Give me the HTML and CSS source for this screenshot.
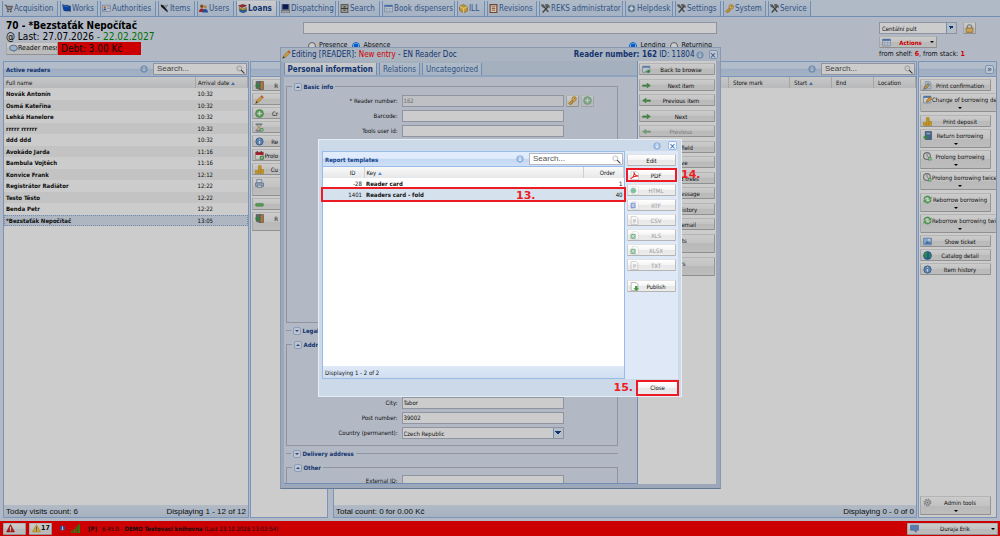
FILE: index.html
```html
<!DOCTYPE html>
<html lang="en">
<head>
<meta charset="utf-8">
<title>Loans</title>
<link rel="stylesheet" href="styles.css">
</head>
<body>
<svg class="sprite" aria-hidden="true">
  <symbol id="cart" viewBox="0 0 16 16"><path d="M1 2h3l2 8h7l2-6H5" fill="#aaa" stroke="#555" stroke-width="1.5"/><circle cx="7" cy="13" r="1.5" fill="#444"/><circle cx="12" cy="13" r="1.5" fill="#444"/></symbol>
  <symbol id="flag" viewBox="0 0 16 16"><path d="M1 1c4 3 7 0 10 2l4 1v9c-5-2-8 1-12-2z" fill="#0e55c8" stroke="#0a357e"/><path d="M2 3c4 2 6 0 9 2" stroke="#7fb2ff" fill="none"/></symbol>
  <symbol id="card" viewBox="0 0 16 16"><rect x="1" y="2" width="14" height="11" fill="#e8eefa" stroke="#7e92b5"/><circle cx="5" cy="6" r="2" fill="#d9822b"/><path d="M2 11c1-4 5-4 6 0z" fill="#3b6ec1"/><path d="M9 5h5M9 8h5" stroke="#7e92b5"/></symbol>
  <symbol id="pen" viewBox="0 0 16 16"><path d="M1 1l5 1 7 9 1 4-4-3-8-7z" fill="#222"/><path d="M8 3l6-1-4 5z" fill="#ddd" stroke="#777"/></symbol>
  <symbol id="users" viewBox="0 0 16 16"><circle cx="5" cy="4" r="3" fill="#a65c20"/><path d="M0 14c0-8 10-8 10 0z" fill="#c92a2a"/><circle cx="11" cy="5" r="3" fill="#e0a350"/><path d="M6 15c0-8 10-8 10 0z" fill="#2d63bd"/></symbol>
  <symbol id="books" viewBox="0 0 16 16"><path d="M1 3l8-2 6 2-8 3z" fill="#cf3434" stroke="#711"/><path d="M2 6l6 3 7-3v3l-7 3-6-3z" fill="#f1ce39" stroke="#86681a"/><path d="M3 10l6 2 6-2v3l-6 3-6-3z" fill="#317dcb" stroke="#174476"/></symbol>
  <symbol id="computer" viewBox="0 0 16 16"><path d="M2 0h12v10H2z" fill="#111d66" stroke="#6c7994" stroke-width="2"/><path d="M0 12h16v4H0z" fill="#ddd" stroke="#444"/></symbol>
  <symbol id="cabinet" viewBox="0 0 16 16"><path d="M2 1h12v14H2z" fill="#c5c5bb" stroke="#77776e" stroke-width="2"/><path d="M2 8h12M6 5h4M6 11h4" stroke="#444" stroke-width="2"/></symbol>
  <symbol id="grid" viewBox="0 0 16 16"><path d="M1 2h14v12H1z" fill="#fff" stroke="#6b8fc2"/><path d="M1 2h14v3H1z" fill="#4f82cc"/><path d="M5 5v9M10 5v9M1 8h14M1 11h14" stroke="#9db7dc"/></symbol>
  <symbol id="box" viewBox="0 0 16 16"><path d="M1 4l7-3 7 4v7l-7 4-7-5z" fill="#f4bd45" stroke="#9a6a13"/><path d="M1 4l7 4 7-3M8 8v8" fill="none" stroke="#fff0ae" stroke-width="2"/></symbol>
  <symbol id="list" viewBox="0 0 16 16"><path d="M2 1h12v14H2z" fill="#fffbe9" stroke="#8e5540" stroke-width="2"/><path d="M5 5h6M5 8h6M5 11h6" stroke="#c15b2c" stroke-width="1.5"/></symbol>
  <symbol id="tools" viewBox="0 0 16 16"><path d="M3 15L13 4M3 2l10 12" stroke="#555" stroke-width="2.5"/><path d="M8 1c4-2 7 1 7 5l-3-2-3 1zM1 1l4 1 1 4-4-1z" fill="#888" stroke="#444"/></symbol>
  <symbol id="globe" viewBox="0 0 16 16"><circle cx="8" cy="8" r="7" fill="#2472ce" stroke="#154b8a"/><path d="M3 3c4-3 6 0 4 3s2 3-1 7C2 12 0 7 3 3zM10 2c5 2 6 8 2 11-3-4 1-5-2-11z" fill="#3fae49"/></symbol>
  <symbol id="help" viewBox="0 0 16 16"><circle cx="8" cy="8" r="6" fill="#aac8e8" stroke="#4f7aa8"/><path d="M3 4l10 8M13 4L3 12" stroke="#557fac" stroke-width="2"/><circle cx="8" cy="8" r="3" fill="#fff"/></symbol>
  <symbol id="key" viewBox="0 0 16 16"><path d="M8 6l-7 7 2 2h3v-2h2v-3l3 1" fill="#f2bb45" stroke="#b37c22"/><circle cx="11" cy="5" r="4" fill="#ffd469" stroke="#b37c22"/><circle cx="12" cy="4" r="1" fill="#805000"/></symbol>
  <symbol id="info" viewBox="0 0 16 16"><circle cx="8" cy="8" r="6.5" fill="#a9c6e8" stroke="#7ba0cd" stroke-width="1.5"/><path d="M8 7v5M8 3v2" stroke="#f4f9ff" stroke-width="2.5"/></symbol>
  <symbol id="infodark" viewBox="0 0 16 16"><circle cx="8" cy="8" r="6.5" fill="#6fa0d8" stroke="#4674ab" stroke-width="1.5"/><path d="M8 7v5M8 3v2" stroke="#fff" stroke-width="2.5"/></symbol>
  <symbol id="search" viewBox="0 0 16 16"><circle cx="6" cy="6" r="4.5" fill="#f5f9ff" stroke="#bbb" stroke-width="1.5"/><path d="M9 9l6 6" stroke="#444" stroke-width="2"/></symbol>
  <symbol id="bubble" viewBox="0 0 16 16"><ellipse cx="8" cy="7" rx="7" ry="5" fill="#c6ddf6" stroke="#527cae" stroke-width="1.5"/><path d="M6 11l4 4v-4" fill="#79a5d2"/></symbol>
  <symbol id="pencil" viewBox="0 0 16 16"><path d="M1 15l2-5 9-9 3 3-9 9z" fill="#ffc64f" stroke="#ad761e"/><path d="M1 15l2-4 2 2z" fill="#333"/><path d="M11 2l3 3" stroke="#e55" stroke-width="2"/></symbol>
  <symbol id="plus" viewBox="0 0 16 16"><circle cx="8" cy="8" r="7" fill="#6cc46c" stroke="#4c9450"/><path d="M8 4v8M4 8h8" stroke="#fff" stroke-width="2.5"/></symbol>
  <symbol id="door" viewBox="0 0 16 16"><path d="M8 1h7v14H8z" fill="#ce9957" stroke="#704b21"/><path d="M2 1h7v14l-7-2z" fill="#798792" stroke="#555"/><path d="M0 8l5-4v3h4v3H5v3z" fill="#41a046"/></symbol>
  <symbol id="hourglass" viewBox="0 0 16 16"><path d="M1 2h12M1 14h9" stroke="#6a88b0" stroke-width="2"/><path d="M3 3h8c0 3-3 4-3 5s2 3 2 5H3c0-3 3-4 3-5S3 6 3 3z" fill="#f6dcae" stroke="#8f8270"/><circle cx="12" cy="12" r="3.5" fill="#61b565"/><path d="M12 10v4M10 12h4" stroke="#fff"/></symbol>
  <symbol id="calendar" viewBox="0 0 16 16"><path d="M1 2h14v13H1z" fill="#fff" stroke="#999"/><path d="M1 2h14v5H1z" fill="#d42030"/><path d="M4 0v4M11 0v4" stroke="#555" stroke-width="2"/><circle cx="12" cy="12" r="4" fill="#58ae59"/><path d="M12 10v4M10 12h4" stroke="#fff"/></symbol>
  <symbol id="coins" viewBox="0 0 16 16"><path d="M6 1h5v14H6zM0 10h7v5H0zM10 8h6v7h-6z" fill="#fac83d" stroke="#d39b22"/><path d="M6 4h5M6 7h5M0 12h7M10 11h6" stroke="#d39b22"/></symbol>
  <symbol id="printer" viewBox="0 0 16 16"><path d="M3 1h9v6H3z" fill="#fff" stroke="#4f79ad"/><path d="M1 7h14v6H1z" fill="#bed2ec" stroke="#48688e"/><path d="M4 11h8v4H4z" fill="#fff" stroke="#48688e"/></symbol>
  <symbol id="minus" viewBox="0 0 16 16"><rect x="1" y="6" width="14" height="5" rx="2" fill="#6cc06a" stroke="#489a4a"/></symbol>
  <symbol id="right" viewBox="0 0 16 16"><path d="M1 7h8V4l6 4-6 4V9.500H1z" fill="#58ad58" stroke="#459048"/></symbol>
  <symbol id="left" viewBox="0 0 16 16"><path d="M15 7H7V4L1 8l6 4V9.500h8z" fill="#58ad58" stroke="#459048"/></symbol>
  <symbol id="browse" viewBox="0 0 16 16"><path d="M1 2h13v11H1z" fill="#eef5ff" stroke="#668bb7"/><path d="M1 2h13v3H1z" fill="#6e9bd0"/><path d="M6 10h4V7l5 4-5 4v-3H6z" fill="#43a047"/></symbol>
  <symbol id="lock" viewBox="0 0 16 16"><path d="M4 8V5c0-5 8-5 8 0v3" fill="none" stroke="#999" stroke-width="2"/><path d="M2 7h12v8H2z" fill="#f1bd58" stroke="#a27426"/><path d="M3 10h10M3 12h10" stroke="#ffe0a0"/></symbol>
  <symbol id="edit" viewBox="0 0 16 16"><path d="M1 2h13v12H1z" fill="#fff" stroke="#5a87bd"/><path d="M1 2h13v3H1z" fill="#5a87c8"/><path d="M6 13l1-4 6-6 3 3-6 6z" fill="#ffb743" stroke="#9d6714"/></symbol>
  <symbol id="note" viewBox="0 0 16 16"><path d="M4 1h8l2 3v10H4z" fill="#d7e8ff" stroke="#82a0c4"/><path d="M1 15l2-5 6-6 3 3-6 6z" fill="#f7b43f" stroke="#3a699f"/></symbol>
  <symbol id="return" viewBox="0 0 16 16"><path d="M4 1h11v14H4z" fill="#567fae" stroke="#28496e"/><path d="M6 3h7v3H6z" fill="#a9c9ec"/><path d="M0 11l5-4v3h4v3H5v3z" fill="#49a64c"/></symbol>
  <symbol id="clock" viewBox="0 0 16 16"><circle cx="7" cy="7" r="6" fill="#f5f5f5" stroke="#8b8b8b" stroke-width="2"/><path d="M7 3v4l3 2" fill="none" stroke="#555"/><path d="M9 9h6v6H9z" fill="#64b468"/><path d="M12 10v4M10 12h4" stroke="#fff"/></symbol>
  <symbol id="refresh" viewBox="0 0 16 16"><path d="M2 7c1-5 8-6 10-2M14 9c-1 5-8 6-10 2" fill="none" stroke="#5cb960" stroke-width="3"/><path d="M15 2v6H9zM1 14V8h6z" fill="#5cb960"/></symbol>
  <symbol id="ticket" viewBox="0 0 16 16"><path d="M1 2h14v12H1z" fill="#aacdf5" stroke="#4e84c4"/><path d="M3 12l4-5 3 3 2-2 2 4z" fill="#447fca"/><circle cx="11" cy="5" r="2" fill="#fff"/></symbol>
  <symbol id="gear" viewBox="0 0 16 16"><circle cx="8" cy="8" r="5" fill="none" stroke="#aaa" stroke-width="4" stroke-dasharray="2.5 1.4"/><circle cx="8" cy="8" r="4" fill="#ddd" stroke="#999"/><circle cx="8" cy="8" r="1.500" fill="#888"/></symbol>
  <symbol id="page" viewBox="0 0 16 16"><path d="M2 1h9l3 3v11H2z" fill="#fff" stroke="#888"/><path d="M5 6h6M5 8h6M5 10h6M5 12h4" stroke="#888"/></symbol>
  <symbol id="pdf" viewBox="0 0 16 16"><path d="M2 1h9l4 3v11H2z" fill="#fff" stroke="#bbb"/><path d="M1 14c5-3 7-8 6-12 1 5 4 7 8 7-6 0-10 1-14 5z" fill="none" stroke="#dc2626" stroke-width="1.8"/></symbol>
  <symbol id="web" viewBox="0 0 16 16"><path d="M4 1h8l3 3v11H4z" fill="#fff" stroke="#bbb"/><circle cx="6" cy="8" r="5" fill="#45a568"/><path d="M2 6c3-3 5 0 4 3" fill="#438fd0"/></symbol>
  <symbol id="rtf" viewBox="0 0 16 16"><path d="M4 1h8l3 3v11H4z" fill="#fff" stroke="#bbb"/><path d="M1 3h9v10H1z" fill="#3f67c5"/><path d="M3 6h5M3 8h5M3 10h5" stroke="#fff"/></symbol>
  <symbol id="xls" viewBox="0 0 16 16"><path d="M4 1h8l3 3v11H4z" fill="#fff" stroke="#bbb"/><path d="M1 5h9v9H1z" fill="#389248"/><path d="M3 7l5 5M8 7l-5 5" stroke="#fff" stroke-width="1.500"/></symbol>
  <symbol id="publish" viewBox="0 0 16 16"><path d="M2 1h9l3 3v11H2z" fill="#fff" stroke="#888"/><path d="M9 7h4v4h3l-5 5-5-5h3z" fill="#3c9b37"/></symbol>
  <symbol id="redwarn" viewBox="0 0 16 16"><path d="M8 1l7 13H1z" fill="#e02222" stroke="#900"/><path d="M8 5v5M8 11v2" stroke="#fff" stroke-width="2"/></symbol>
  <symbol id="warn" viewBox="0 0 16 16"><path d="M8 1l7 13H1z" fill="#ffd64d" stroke="#cc9820"/><path d="M8 5v5M8 11v2" stroke="#555" stroke-width="1.500"/></symbol>
  <symbol id="signal" viewBox="0 0 16 16"><path d="M0 12h3v4H0zM4 9h3v7H4zM8 5h3v11H8zM12 1h4v15h-4z" fill="#3f9414"/></symbol>
  <symbol id="dot" viewBox="0 0 16 16"><circle cx="8" cy="7" r="6" fill="#3e5dba"/><path d="M8 3v7M6 10h4" stroke="#fff" stroke-width="2"/></symbol>
  <symbol id="chat" viewBox="0 0 16 16"><path d="M1 2h14v9h-4v4l-4-4H1z" fill="#6f99d8" stroke="#5276ad"/></symbol>
</svg>

<div class="app">
  <nav class="tabs">
    <a href="#"><svg><use href="#cart"/></svg>Acquisition</a>
    <a href="#"><svg><use href="#flag"/></svg>Works</a>
    <a href="#"><svg><use href="#card"/></svg>Authorities</a>
    <a href="#"><svg><use href="#pen"/></svg>Items</a>
    <a href="#"><svg><use href="#users"/></svg>Users</a>
    <a href="#" class="active"><svg><use href="#books"/></svg>Loans</a>
    <a href="#"><svg><use href="#computer"/></svg>Dispatching</a>
    <a href="#"><svg><use href="#cabinet"/></svg>Search</a>
    <a href="#"><svg><use href="#grid"/></svg>Book dispensers</a>
    <a href="#"><svg><use href="#box"/></svg>ILL</a>
    <a href="#"><svg><use href="#list"/></svg>Revisions</a>
    <a href="#"><svg><use href="#tools"/></svg>REKS administrator</a>
    <a href="#"><svg><use href="#help"/></svg>Helpdesk</a>
    <a href="#"><svg><use href="#tools"/></svg>Settings</a>
    <a href="#"><svg><use href="#key"/></svg>System</a>
    <a href="#"><svg><use href="#tools"/></svg>Service</a>
  </nav>

  <header class="reader">
    <div class="who">
      <h1>70 - *Bezstaťák Nepočítač</h1>
      <p>@ Last: 27.07.2026 <span class="green">- 22.02.2027</span></p>
      <div class="whobar">
        <button class="btn message"><svg><use href="#bubble"/></svg><span>Reader mess</span></button>
        <strong class="debt">Debt: 3.00 Kč</strong>
      </div>
    </div>
    <div class="scan">
      <input type="text" aria-label="Barcode scan">
      <div class="radios">
        <label><input type="radio" name="place">Presence</label>
        <label><input type="radio" name="place" checked>Absence</label>
        <label class="lending"><input type="radio" name="mode" checked>Lending</label>
        <label><input type="radio" name="mode">Returning</label>
      </div>
    </div>
    <div class="desk">
      <div class="deskrow">
        <span class="combo"><select aria-label="Desk"><option>Centální pult</option></select></span>
        <button class="btn square" aria-label="Lock"><svg><use href="#lock"/></svg></button>
      </div>
      <button class="btn actions"><svg><use href="#grid"/></svg><span>Actions</span><i class="caret"></i></button>
      <p>from shelf: <b>6</b>, from stack: <b>1</b></p>
    </div>
  </header>

  <main class="main">
    <section class="panel">
      <div class="phead"><h2>Active readers</h2><svg class="inf"><use href="#info"/></svg><div class="search"><input type="text" placeholder="Search..." aria-label="Search readers"><svg><use href="#search"/></svg></div></div>
      <table class="readers">
        <thead><tr><th>Full name</th><th class="time">Arrival date <i class="sort"></i></th></tr></thead>
        <tbody>
          <tr><td>Novák Antonín</td><td>10:32</td></tr>
          <tr><td>Osmá Kateřina</td><td>10:32</td></tr>
          <tr><td>Lehká Hanelore</td><td>10:32</td></tr>
          <tr><td>rrrrr rrrrrr</td><td>10:32</td></tr>
          <tr><td>ddd ddd</td><td>10:32</td></tr>
          <tr><td>Avokádo Jarda</td><td>11:16</td></tr>
          <tr><td>Bambula Vojtěch</td><td>11:16</td></tr>
          <tr><td>Konvice Frank</td><td>12:12</td></tr>
          <tr><td>Registrátor Radiátor</td><td>12:22</td></tr>
          <tr><td>Testo Těsto</td><td>12:22</td></tr>
          <tr><td>Benda Petr</td><td>12:22</td></tr>
          <tr class="sel"><td>*Bezstaťák Nepočítač</td><td>13:05</td></tr>
        </tbody>
      </table>
      <div class="pfoot"><span>Today visits count: 6</span><span>Displaying 1 - 12 of 12</span></div>
    </section>

    <section class="panel">
      <div class="phead"></div>
      <div class="ops readerops">
        <button class="btn"><svg><use href="#door"/></svg><span>R</span></button>
        <button class="btn" aria-label="Edit reader"><svg><use href="#pencil"/></svg></button>
        <button class="btn"><svg><use href="#plus"/></svg><span>Cr</span></button>
        <button class="btn" aria-label="Reserve"><svg><use href="#hourglass"/></svg></button>
        <button class="btn"><svg><use href="#infodark"/></svg><span>Re</span></button>
        <button class="btn"><svg><use href="#calendar"/></svg><span>Prolo</span></button>
        <button class="btn"><svg><use href="#coins"/></svg><span>Cu</span></button>
        <button class="btn tall" aria-label="Print"><svg><use href="#printer"/></svg></button>
        <button class="btn" aria-label="Remove"><svg><use href="#minus"/></svg></button>
        <button class="btn tall"><svg><use href="#door"/></svg><span>R</span></button>
      </div>
    </section>

    <section class="panel loans">
      <div class="phead"><h2></h2><svg class="inf"><use href="#info"/></svg><div class="search"><input type="text" placeholder="Search..." aria-label="Search loans"><svg><use href="#search"/></svg></div></div>
      <table class="loantable"><thead><tr><th></th><th class="mark">Store mark</th><th class="date">Start <i class="sort"></i></th><th class="date">End</th><th class="date">Location</th></tr></thead></table>
      <div class="pfoot"><span>Total count: 0 for 0.00 Kč</span><span>Displaying 0 - 0 of 0</span></div>
    </section>

    <section class="panel">
      <div class="phead end"><button class="tool" aria-label="Collapse">»</button></div>
      <div class="ops loanops">
        <button class="btn"><svg><use href="#note"/></svg><span>Print confirmation</span></button>
        <button class="btn tall wide"><svg><use href="#edit"/></svg><span>Change of borrowing de</span><i class="caret"></i></button>
        <button class="btn"><svg><use href="#coins"/></svg><span>Print deposit</span></button>
        <button class="btn tall"><svg><use href="#return"/></svg><span>Return borrowing</span><i class="caret"></i></button>
        <button class="btn tall"><svg><use href="#clock"/></svg><span>Prolong borrowing</span><i class="caret"></i></button>
        <button class="btn tall wide"><svg><use href="#clock"/></svg><span>Prolong borrowing twice</span><i class="caret"></i></button>
        <button class="btn tall"><svg><use href="#refresh"/></svg><span>Reborrow borrowing</span><i class="caret"></i></button>
        <button class="btn tall wide"><svg><use href="#refresh"/></svg><span>Reborrow borrowing twi</span><i class="caret"></i></button>
        <button class="btn"><svg><use href="#ticket"/></svg><span>Show ticket</span></button>
        <button class="btn"><svg><use href="#globe"/></svg><span>Catalog detail</span></button>
        <button class="btn"><svg><use href="#infodark"/></svg><span>Item history</span></button>
      </div>
      <div class="ops admin"><button class="btn tall"><svg><use href="#gear"/></svg><span>Admin tools</span><i class="caret"></i></button></div>
    </section>
  </main>

  <footer class="status">
    <button class="btn alert" aria-label="Alerts"><svg><use href="#redwarn"/></svg></button>
    <button class="btn alert"><svg><use href="#warn"/></svg><b>17</b></button>
    <svg class="led"><use href="#dot"/></svg><svg class="signal"><use href="#signal"/></svg>
    <b class="mode">[P]</b>
    <span>6.45.0 - <b>DEMO Testovací knihovna</b> (Last 23.10.2026 13:02:54)</span>
    <button class="btn account"><svg><use href="#chat"/></svg><span>Duraja Erik</span><i class="caret"></i></button>
  </footer>
</div>

<section class="window editor" role="dialog" aria-label="Editing reader">
  <div class="wtitle"><svg><use href="#pencil"/></svg><span>Editing [READER]: <span class="red">New entry</span> - EN Reader Doc</span><span class="ident"><b>Reader number: 162</b> ID: 11804</span><svg class="inf"><use href="#info"/></svg><button class="tool" aria-label="Close editor">×</button></div>
  <div class="wbody">
    <div class="formside">
      <nav class="subtabs"><a href="#" class="active">Personal information</a><a href="#">Relations</a><a href="#">Uncategorized</a></nav>
      <form class="form">
        <fieldset class="basic"><legend><i class="fold up"></i>Basic info</legend>
          <div class="field"><label for="num">* Reader number:</label><input id="num" value="162" disabled><button type="button" class="btn mini" aria-label="Key"><svg><use href="#key"/></svg></button><button type="button" class="btn mini faded" aria-label="Add"><svg><use href="#plus"/></svg></button></div>
          <div class="field"><label for="bar">Barcode:</label><input id="bar"></div>
          <div class="field"><label for="tool">Tools user id:</label><input id="tool"></div>
        </fieldset>
        <fieldset class="folded"><legend><i class="fold down"></i>Legal</legend></fieldset>
        <fieldset class="address"><legend><i class="fold up"></i>Address</legend>
          <div class="stack">
          <div class="field"><label for="city">City:</label><input id="city" value="Tabor"></div>
          <div class="field"><label for="post">Post number:</label><input id="post" value="39002"></div>
          <div class="field"><label for="land">Country (permanent):</label><span class="combo"><select id="land"><option>Czech Republic</option></select></span></div>
          </div>
        </fieldset>
        <fieldset class="folded"><legend><i class="fold down"></i>Delivery address</legend></fieldset>
        <fieldset class="other"><legend><i class="fold up"></i>Other</legend>
          <div class="field"><label for="ext">External ID:</label><input id="ext"></div>
        </fieldset>
      </form>
    </div>
    <div class="ops editops">
      <button class="btn"><svg><use href="#browse"/></svg><span>Back to browse</span></button>
      <button class="btn"><svg><use href="#right"/></svg><span>Next item</span></button>
      <button class="btn"><svg><use href="#left"/></svg><span>Previous item</span></button>
      <button class="btn"><svg><use href="#right"/></svg><span>Next</span></button>
      <button class="btn" disabled><svg><use href="#left"/></svg><span>Previous</span></button>
      <button class="btn shifted"><span>Add field</span></button>
      <button class="btn shifted"><span>Save</span></button>
      <button class="btn shifted"><span>Related trees</span></button>
      <button class="btn shifted"><span>New message</span></button>
      <button class="btn shifted"><span>User history</span></button>
      <button class="btn shifted"><span>Send email</span></button>
      <button class="btn tall"><span>Reports</span></button>
      <button class="btn tall"><span>Others</span></button>
    </div>
  </div>
</section>

<div class="mask"></div>

<section class="window reports" role="dialog" aria-label="Report templates">
  <div class="wtitle"><svg class="inf"><use href="#info"/></svg><button class="tool" aria-label="Close reports">×</button></div>
  <div class="rbody">
    <div class="panel templates">
      <div class="phead"><h2>Report templates</h2><svg class="inf"><use href="#info"/></svg><div class="search"><input type="text" placeholder="Search..." aria-label="Search templates"><svg><use href="#search"/></svg></div></div>
      <table class="reporttable">
        <thead><tr><th class="id">ID</th><th>Key <i class="sort"></i></th><th class="order">Order</th></tr></thead>
        <tbody>
          <tr><td class="id">-28</td><td><b>Reader card</b></td><td class="order">1</td></tr>
          <tr class="marked"><td class="id">1401</td><td><b>Readers card - fold</b></td><td class="order">40</td></tr>
        </tbody>
      </table>
      <strong class="step on-row">13.</strong>
      <div class="pfoot">Displaying 1 - 2 of 2</div>
    </div>
    <div class="ops formats">
      <button class="btn"><span>Edit</span></button>
      <button class="btn ring"><svg><use href="#pdf"/></svg><span>PDF</span></button>
      <button class="btn" disabled><svg><use href="#web"/></svg><span>HTML</span></button>
      <button class="btn" disabled><svg><use href="#rtf"/></svg><span>RTF</span></button>
      <button class="btn" disabled><svg><use href="#page"/></svg><span>CSV</span></button>
      <button class="btn" disabled><svg><use href="#xls"/></svg><span>XLS</span></button>
      <button class="btn" disabled><svg><use href="#xls"/></svg><span>XLSX</span></button>
      <button class="btn" disabled><svg><use href="#page"/></svg><span>TXT</span></button>
      <button class="btn publish"><svg><use href="#publish"/></svg><span>Publish</span></button>
    </div>
  </div>
  <div class="rfoot"><strong class="step">15.</strong><button class="btn ring close"><span>Close</span></button></div>
  <strong class="step beside">14.</strong>
</section>
</body>
</html>
```

FILE: styles.css
```css
* { box-sizing: border-box; }
html, body { height: 100%; }
body {
  margin: 0;
  position: relative;
  overflow: hidden;
  font: 6px/11px "DejaVu Sans Condensed", "Noto Sans", sans-serif;
  color: #111;
  background: #dfe8f6;
}
h1, h2, p { margin: 0; }
button, input, select { font: inherit; color: inherit; margin: 0; }
a { text-decoration: none; }
.sprite { position: absolute; width: 0; height: 0; }
svg { width: 9px; height: 9px; flex: none; }
.red { color: #f00; }
.green { color: #008a00; }

.app { height: 100%; display: flex; flex-direction: column; }

/* module tabs */
.tabs {
  display: grid;
  grid-template-columns: 56px 38px 56px 37px 37px 41px 57px 42px 73px 28px 50px 84px 48px 46px 43px 43px;
  gap: 2px;
  height: 17px;
  padding: 1px 2px 0;
  border-bottom: 1px solid #8db2e3;
  background: #dce8f8;
  font-size: 8px;
}
.tabs a, .subtabs a {
  display: flex;
  align-items: center;
  color: #416aa3;
  border: 1px solid #8db2e3;
  border-width: 0 1px;
  background: linear-gradient(#dceafb, #cfdff5);
  white-space: nowrap;
}
.tabs a { gap: 1px; padding-left: 1px; }
.tabs .active, .subtabs .active { font-weight: bold; color: #15428b; background: linear-gradient(#fff, #dfe8f6); }

/* reader header */
.reader { display: flex; height: 44px; flex: none; }
.who { width: 303px; padding: 3px 0 0 6px; font-size: 10px; }
.who h1 { font-size: 10px; line-height: 11px; color: #000; }
.who p { line-height: 11px; color: #000; }
.whobar { display: flex; height: 13px; }
.whobar .message { width: 52px; height: 13px; font-size: 7px; }
.whobar .message span { flex: none; }
.debt { width: 83px; height: 13px; padding-left: 3px; background: #f00; font-weight: normal; line-height: 13px; }
.scan { flex: 1; padding-top: 5px; }
.scan > input { display: block; width: 100%; height: 12px; border: 1px solid #b5b8c8; background: #fff; }
.radios { display: flex; gap: 5px; padding: 6px 5px 0; font-size: 7px; }
.radios label { display: flex; align-items: center; gap: 3px; }
.radios input { width: 8px; height: 8px; }
.radios .lending { margin-left: auto; }
.desk { width: 283px; padding: 5px 0 0 162px; }
.deskrow { display: flex; gap: 6px; height: 12px; }
.deskrow .combo { width: 78px; }
.desk .actions { width: 58px; height: 12px; margin-top: 2px; }
.actions span { color: #f00; font-weight: bold; }
.desk p { font-size: 7px; line-height: 13px; white-space: nowrap; }
.desk p b { color: #f00; }
.combo { display: flex; position: relative; height: 12px; }
.combo select { width: 100%; height: 12px; padding: 0 2px; border: 1px solid #b5b8c8; border-radius: 0; appearance: none; background: #fff; }
.combo::after {
  content: "";
  position: absolute; right: 1px; top: 1px; bottom: 1px;
  width: 9px;
  border-left: 1px solid #8db2e3;
  background: linear-gradient(45deg, transparent 50%, #15428b 50%) 1px 3px / 3px 3px no-repeat, linear-gradient(315deg, transparent 50%, #15428b 50%) 4px 3px / 3px 3px no-repeat, #e3edfb;
  pointer-events: none;
}

/* buttons */
.btn {
  display: flex;
  align-items: center;
  min-width: 0;
  height: 12px;
  padding: 0 2px;
  border: 1px solid #c4c4c4;
  border-color: #e2e2e2 #bcbcbc #b4b4b4 #d0d0d0;
  border-radius: 1px;
  background: linear-gradient(#fff, #f4f4f4 50%, #e8e8e8 50%, #ececec);
  line-height: 9px;
  overflow: hidden;
}
.btn span { flex: 1; text-align: center; white-space: nowrap; }
.btn[disabled] { color: #999; }
.btn[disabled] svg { opacity: .6; }
.btn.tall { height: 19px; display: grid; grid-template-columns: 9px 1fr; grid-template-rows: 10px 7px; align-items: center; }
.btn.tall .caret { grid-column: 1 / 3; justify-self: center; }
.btn.tall span:first-child { grid-column: 1 / 3; }
.square { width: 13px; padding: 0 1px; }
.caret { border: 2px solid transparent; border-top-color: #000; border-bottom: 0; }
.tool { width: 9px; height: 9px; padding: 0; border: 1px solid #9bbce8; border-radius: 2px; background: #f2f7ff; color: #2a5aa5; font-size: 9px; line-height: 6px; }

/* columns */
.main { flex: 1; min-height: 0; display: grid; grid-template-columns: 246px 78px minmax(0, 1fr) 79px; column-gap: 1px; padding: 0 3px 3px; background: #dfe8f6; }
.panel { display: flex; flex-direction: column; min-width: 0; border: 1px solid #99bbe8; background: #fff; overflow: hidden; }
.loans { margin-left: 4px; }
.phead { display: flex; align-items: center; height: 15px; flex: none; padding: 0 1px 0 2px; gap: 5px; background: linear-gradient(#e0ecfc 0 45%, #c4d8f2 50%, #cfe0f6); border-bottom: 1px solid #99bbe8; }
.phead h2 { flex: 1; font-size: 6px; color: #15428b; }
.phead.end { justify-content: flex-end; padding-right: 2px; }
.inf { width: 8px; height: 8px; }
.search { display: flex; align-items: center; width: 94px; height: 12px; padding-right: 1px; border: 1px solid #b5b8c8; background: #fff; }
.search input { flex: 1; min-width: 0; padding: 0 3px; border: 0; outline: 0; background: transparent; font: 8px/10px "Liberation Sans", Arial, sans-serif; }
.search input::placeholder { color: #555; }
.pfoot { display: flex; justify-content: space-between; align-items: center; height: 12px; flex: none; margin-top: auto; padding: 0 2px; background: linear-gradient(#dfe9f7, #cfdef0); font: 8px/11px "Liberation Sans", Arial, sans-serif; }

table { width: 100%; border-collapse: collapse; table-layout: fixed; }
th { height: 11px; padding: 0 2px; text-align: left; font-weight: normal; line-height: 10px; background: linear-gradient(#f9f9f9, #e6e7e9); border-right: 1px solid #d0d0d0; }
td { padding: 0 2px; line-height: 11px; }
.sort { display: inline-block; border: 2px solid transparent; border-bottom: 3px solid #5a8bd0; border-top: 0; }
.readers { height: 149px; }
.readers .time { width: 52px; }
.readers td:first-child { font-weight: bold; }
.readers tbody tr:nth-child(even) { background: #f4f4f4; }
.readers tbody tr.sel { background: #d9e4f2; outline: 1px dotted #8eaedb; outline-offset: -1px; }
.loantable th { padding-left: 4px; }
.loantable .mark { width: 61px; }
.loantable .date { width: 42px; }

.ops { display: grid; gap: 2px; padding: 2px 1px; align-content: start; }
.ops .btn { width: 100%; }
.readerops .btn span { padding-right: 45px; text-align: right; }
.loanops { grid-template-rows: 12px 20px 12px 19px 19px 20px 19px 19px; padding-right: 0; }
.loanops .btn, .admin .btn { width: 71px; }
.loanops .btn.wide { width: 100%; padding-right: 0; border-right: 0; }
.admin { margin-top: auto; }

/* status bar */
.status { display: flex; align-items: center; height: 15px; flex: none; padding: 0 2px 0 3px; background: #f00; gap: 3px; }
.status .alert { width: 23px; }
.status .alert b { flex: 1; text-align: right; font-size: 7px; }
.led { width: 7px; height: 7px; margin-left: 4px; }
.signal { margin-left: 2px; }
.status .mode { margin: 0 2px 0 5px; }
.status .account { width: 91px; margin-left: auto; }

/* windows */
.window { position: absolute; inset: 0; margin: auto; display: flex; flex-direction: column; }
.editor { width: 441px; height: 442px; padding: 0 4px 4px 3px; background: #c3d3e8; border: 1px solid #a9bfdc; border-bottom: 1px solid #7f99be; }
.wtitle { display: flex; align-items: center; flex: none; }
.editor .wtitle { height: 13px; background: #d5e1f1; margin: 0 -4px 0 -3px; padding: 0 2px 0 1px; font-size: 8px; color: #15428b; gap: 1px; }
.editor .ident { margin-left: auto; }
.editor .tool { margin-left: 4px; }
.wbody { display: flex; flex: 1; min-height: 0; background: #fff; }
.formside { flex: 1; display: flex; flex-direction: column; min-width: 0; border-right: 1px solid #8db2e3; }
.subtabs { display: flex; gap: 2px; height: 16px; flex: none; padding-top: 2px; border-bottom: 2px solid #b4cdf0; background: #cfdcee; font-size: 8px; }
.subtabs a { padding: 0 3px; }
.form { flex: 1; overflow: hidden; padding: 4px 19px 0 2px; background: #dfe8f6; border-bottom: 1px solid #8db2e3; }
fieldset { margin: 0 0 2px; padding: 3px 0 0; border: 1px solid #b5b8c8; min-width: 0; }
legend { margin-left: 5px; padding: 0 2px; display: flex; align-items: center; gap: 2px; font-weight: bold; color: #15428b; line-height: 11px; }
.fold { width: 8px; height: 8px; border: 1px solid #a9c5ec; border-radius: 2px; background: #f0f6ff; display: grid; place-items: center; }
.fold::after { content: ""; border: 2px solid transparent; }
.up::after { border-bottom-color: #2a5aa5; border-top: 0; }
.down::after { border-top-color: #2a5aa5; border-bottom: 0; }
.basic { height: 242px; }
.folded { height: 12px; padding: 0; border-width: 1px 0 0; }
.address { height: 107px; }
.stack { display: flex; flex-direction: column; justify-content: flex-end; height: 89px; }
.other { height: 60px; padding-top: 2px; }
.field { display: flex; align-items: center; gap: 2px; height: 11px; margin-bottom: 4px; }
.field label { width: 111px; margin-right: 2px; text-align: right; flex: none; }
.field input { width: 162px; height: 12px; padding: 0 1px; border: 1px solid #b5b8c8; background: #fff; flex: none; }
.field input:disabled { color: #888; background: #eef1f6; }
.field .combo { width: 162px; }
.field .combo select { padding: 0 1px; }
.mini { width: 13px; height: 12px; padding: 0 1px; }
.faded { opacity: .6; }
.editops { width: 78px; grid-template-rows: repeat(5, 12px 11px) 12px 19px 19px; gap: 4px; padding: 2px 1px; }
.shifted { padding-left: 11px; }

.mask { position: absolute; inset: 0; background: rgba(0, 0, 0, .2); }

.reports { width: 364px; height: 258px; padding: 0 3px; background: #ccd9e8; border: 1px solid #e6edf5; }
.reports .wtitle { height: 11px; justify-content: flex-end; gap: 7px; padding-right: 1px; }
.rbody { display: flex; flex: 1; min-height: 0; }
.templates { position: relative; z-index: 1; flex: 1; overflow: visible; }
.templates .pfoot { font: inherit; }
.reporttable .id { width: 41px; padding-right: 8px; text-align: right; }
.reporttable td.id { padding-right: 2px; }
.reporttable .order { width: 40px; padding-right: 8px; text-align: right; }
.reporttable td.order { padding-right: 1px; }
.reporttable .marked { background: #d5e1ed; outline: 2px solid #ed1c24; }
.step { color: #ed1c24; font: bold 11px/12px "DejaVu Sans", Verdana, sans-serif; }
.on-row { position: absolute; left: 193px; top: 38px; }
.beside { position: absolute; left: 362px; top: 29px; }
.formats { width: 53px; padding: 3px 2px; gap: 3px; background: #dfe8f6; }
.ring { outline: 2px solid #ed1c24; outline-offset: -1px; border-radius: 0; }
.publish { margin-top: 6px; }
.rfoot { display: flex; align-items: center; justify-content: flex-end; gap: 4px; height: 17px; flex: none; }
.close { width: 41px; height: 14px; }
```
